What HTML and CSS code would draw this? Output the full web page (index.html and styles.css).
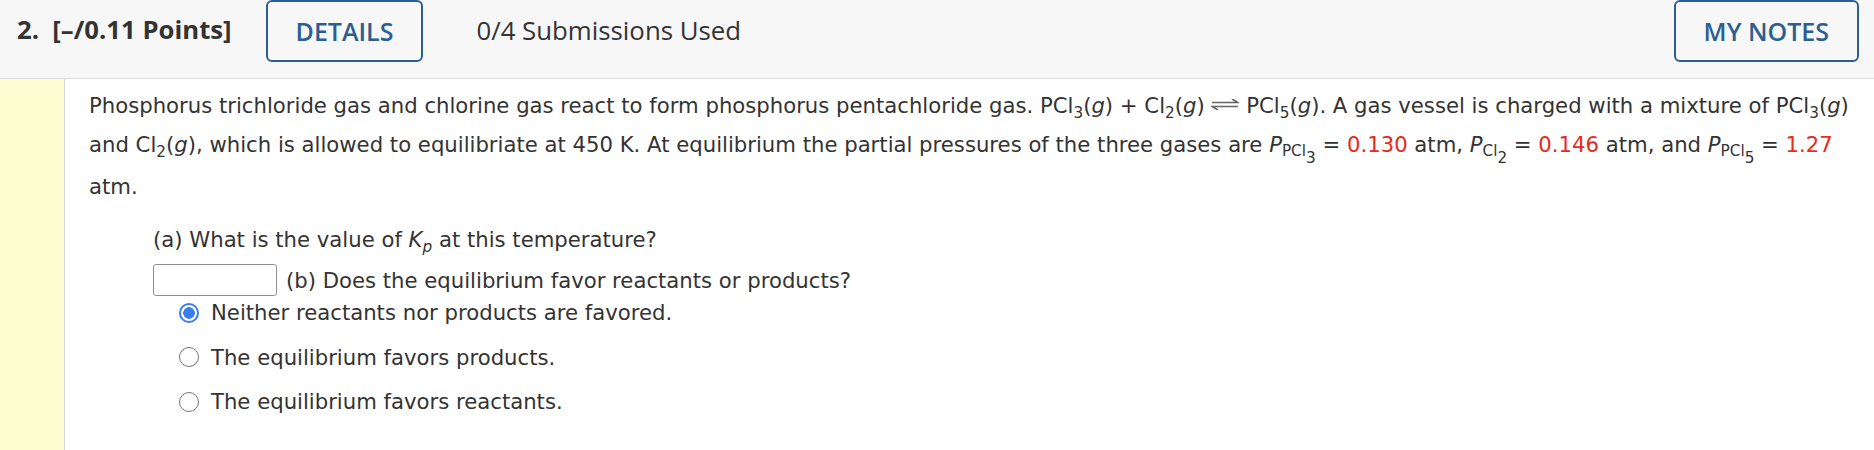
FILE: index.html
```html
<!DOCTYPE html>
<html>
<head>
<meta charset="utf-8">
<link rel="stylesheet" href="styles.css">
</head>
<body>
<div class="header">
  <span class="qnum">2.&nbsp; [–/0.11 Points]</span>
  <button class="btn">DETAILS</button>
  <span class="subs">0/4 Submissions Used</span>
  <button class="btn notes">MY NOTES</button>
</div>
<div class="main">
  <div class="stripe"></div>
  <div class="content">
    <p class="intro">Phosphorus trichloride gas and chlorine gas react to form phosphorus pentachloride gas. PCl<sub>3</sub>(<i>g</i>) + Cl<sub>2</sub>(<i>g</i>) <svg class="eq" viewBox="0 0 28 11" width="28" height="11" aria-label="⇌"><path d="M1 3.5H27L21 0M27 7.5H1L7 11" fill="none" stroke="#666" stroke-width="1.6"/></svg> PCl<sub>5</sub>(<i>g</i>). A gas vessel is charged with a mixture of PCl<sub>3</sub>(<i>g</i>) and Cl<sub>2</sub>(<i>g</i>), which is allowed to equilibriate at 450 K. At equilibrium the partial pressures of the three gases are <i>P</i><sub>PCl<sub class="s2">3</sub></sub> = <span class="red">0.130</span> atm, <i>P</i><sub>Cl<sub class="s2">2</sub></sub> = <span class="red">0.146</span> atm, and <i>P</i><sub>PCl<sub class="s2">5</sub></sub> = <span class="red">1.27</span> atm.</p>
    <div class="parts">
      <p class="qa">(a) What is the value of <i>K</i><sub><i>p</i></sub> at this temperature?</p>
      <div class="qb"><span class="box"></span><span>(b) Does the equilibrium favor reactants or products?</span></div>
      <ul class="opts">
        <li><span class="radio on"></span>Neither reactants nor products are favored.</li>
        <li><span class="radio"></span>The equilibrium favors products.</li>
        <li><span class="radio"></span>The equilibrium favors reactants.</li>
      </ul>
    </div>
  </div>
</div>
</body>
</html>
```
FILE: styles.css
```css
html, body { margin: 0; padding: 0; background: #fff; }
body { width: 1874px; height: 450px; overflow: hidden; }
.header {
  height: 78px;
  background: #f7f7f7;
  border-bottom: 1px solid #dcdcdc;
  display: flex;
  align-items: flex-start;
  box-sizing: content-box;
  font-family: "Open Sans", sans-serif;
  color: #333;
}
.qnum {
  font-weight: 700;
  font-size: 25.7px;
  margin-left: 17px;
  margin-top: 11px;
  line-height: 38px;
  white-space: pre;
}
.btn {
  font-family: "Open Sans", sans-serif;
  font-size: 25px;
  font-weight: 600;
  color: #2b5f94;
  background: transparent;
  border: 2px solid #2b5f94;
  border-radius: 6px;
  height: 62px;
  padding: 0 28px;
  margin: 0;
  margin-left: 34px;
  line-height: 58px;
  box-sizing: border-box;
}
.subs {
  font-size: 25.8px;
  margin-left: 53px;
  margin-top: 11px;
  line-height: 38px;
}
.notes { margin-left: auto; margin-right: 15px; }
.main { display: flex; height: 371px; }
.stripe { width: 64px; background: #fefed2; border-right: 1px solid #d8d8d8; }
.content {
  flex: 1;
  padding: 6.5px 20px 0 24px;
  font-family: "DejaVu Sans", Verdana, sans-serif;
  font-size: 21.2px;
  color: #333;
}
.intro { margin: 0; line-height: 39px; }
sub { font-size: 72%; line-height: 1.2; vertical-align: -0.3em; }
sub .s2 { font-size: 100%; vertical-align: -0.45em; line-height: 1.2; }
.eq { vertical-align: 3px; }
.red { color: #e8291c; }
.parts { padding-left: 64px; margin-top: 14.5px; }
.qa { margin: 0; line-height: 38px; }
.qb { display: flex; align-items: center; margin-top: 5.5px; }
.box {
  width: 124px; height: 32px; box-sizing: border-box;
  border: 1px solid #8f8f8f; border-radius: 3px; margin-right: 9px;
}
.opts { list-style: none; margin: -6px 0 0 0; padding: 0 0 0 26px; }
.opts li { display: flex; align-items: center; height: 44.5px; }
.radio {
  width: 20px; height: 20px; box-sizing: border-box;
  border: 1.5px solid #767676; border-radius: 50%;
  margin-right: 12px; background: #fff;
}
.radio.on {
  border: 2px solid #3b7ded;
  background: radial-gradient(circle, #3b7ded 0 5.5px, #fff 6px);
}
```
